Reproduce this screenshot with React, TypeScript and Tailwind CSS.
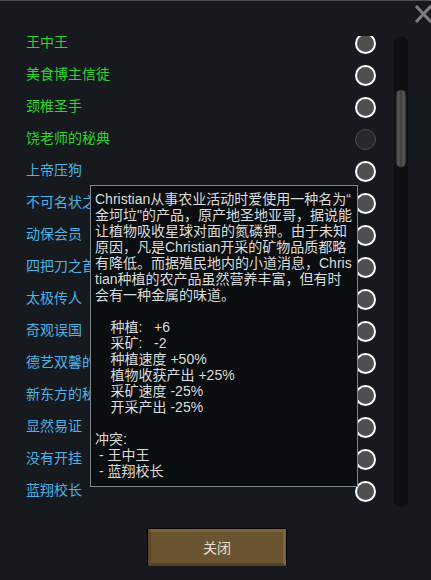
import React from "react";

const items: { name: string; green?: boolean; disabled?: boolean }[] = [
  { name: "王中王", green: true },
  { name: "美食博主信徒", green: true },
  { name: "颈椎圣手", green: true },
  { name: "饶老师的秘典", green: true, disabled: true },
  { name: "上帝压狗" },
  { name: "不可名状之物" },
  { name: "动保会员" },
  { name: "四把刀之首" },
  { name: "太极传人" },
  { name: "奇观误国" },
  { name: "德艺双馨的艺术家" },
  { name: "新东方的秘密" },
  { name: "显然易证" },
  { name: "没有开挂" },
  { name: "蓝翔校长" },
];

const tipLines = [
  "Christian从事农业活动时爱使用一种名为“",
  "金坷垃\"的产品，原产地圣地亚哥，据说能",
  "让植物吸收星球对面的氮磷钾。由于未知",
  "原因，凡是Christian开采的矿物品质都略",
  "有降低。而据殖民地内的小道消息，Chris",
  "tian种植的农产品虽然营养丰富，但有时",
  "会有一种金属的味道。",
  " ",
  "    种植:   +6",
  "    采矿:   -2",
  "    种植速度 +50%",
  "    植物收获产出 +25%",
  "    采矿速度 -25%",
  "    开采产出 -25%",
  " ",
  "冲突:",
  " - 王中王",
  " - 蓝翔校长",
];

export default function App() {
  return (
    <div className="relative w-[431px] h-[580px] overflow-hidden bg-[#16191e] border-t border-[#4a4f57] font-['Liberation_Sans','Noto_Sans_CJK_SC',sans-serif]">
      {/* close X */}
      <svg
        className="absolute left-[414px] top-[3px]"
        width="19"
        height="20"
        viewBox="0 0 19 20"
      >
        <path d="M2 2 L17 18 M17 2 L2 18" stroke="#7d7f82" strokeWidth="3" />
      </svg>

      <div className="flex pt-[35px]">
        <div className="w-[394px] h-[471px] overflow-hidden">
          <div className="-mt-[10px] flex flex-col">
            {items.map((it) => (
              <div
                key={it.name}
                className="h-[32px] flex items-center justify-between pl-[26px] pr-[18px]"
              >
                <span
                  className={
                    "text-[14px] leading-[16px] whitespace-nowrap " +
                    (it.green ? "text-[#2fd42f]" : "text-[#4fb2e6]")
                  }
                >
                  {it.name}
                </span>
                {it.disabled ? (
                  <div className="mt-[2px] w-[21px] h-[21px] rounded-full border-[1.5px] border-[#4b4f53] bg-[#26292d]" />
                ) : (
                  <div className="mt-[2px] w-[21px] h-[21px] rounded-full border-2 border-white bg-[#4f4f4f]" />
                )}
              </div>
            ))}
          </div>
        </div>
        <div className="w-[14px] h-[471px] rounded-full bg-[#0d1013] pt-[53px] px-[1px]">
          <div className="h-[79px] rounded-full border border-[#151515] bg-[linear-gradient(to_right,#2a2a2a,#5c5c5c_22%,#3e3e3e_50%,#5a5a5a_78%,#2a2a2a)]" />
        </div>
      </div>

      {/* close button */}
      <div className="mt-[21px] ml-[147px] w-[140px] h-[38px] border border-b-0 border-black">
        <div className="h-full border-[3px] border-t-[#7d6137] border-l-[#5e4828] border-r-[#806436] border-b-[#54411f] bg-[#6b5431] flex items-center justify-center">
          <span className="text-[14px] leading-[16px] text-[#e8e0d0]">关闭</span>
        </div>
      </div>

      {/* tooltip */}
      <div className="absolute left-[90px] top-[184px] w-[268px] h-[302px] border border-[#7d8690] bg-[#0b0e10] pl-[4px] pt-[5px]">
        {tipLines.map((l, i) => (
          <div
            key={i}
            className="text-[14px] leading-[16px] h-[16px] whitespace-pre text-[#dcdcdc]"
          >
            {l}
          </div>
        ))}
      </div>
    </div>
  );
}
